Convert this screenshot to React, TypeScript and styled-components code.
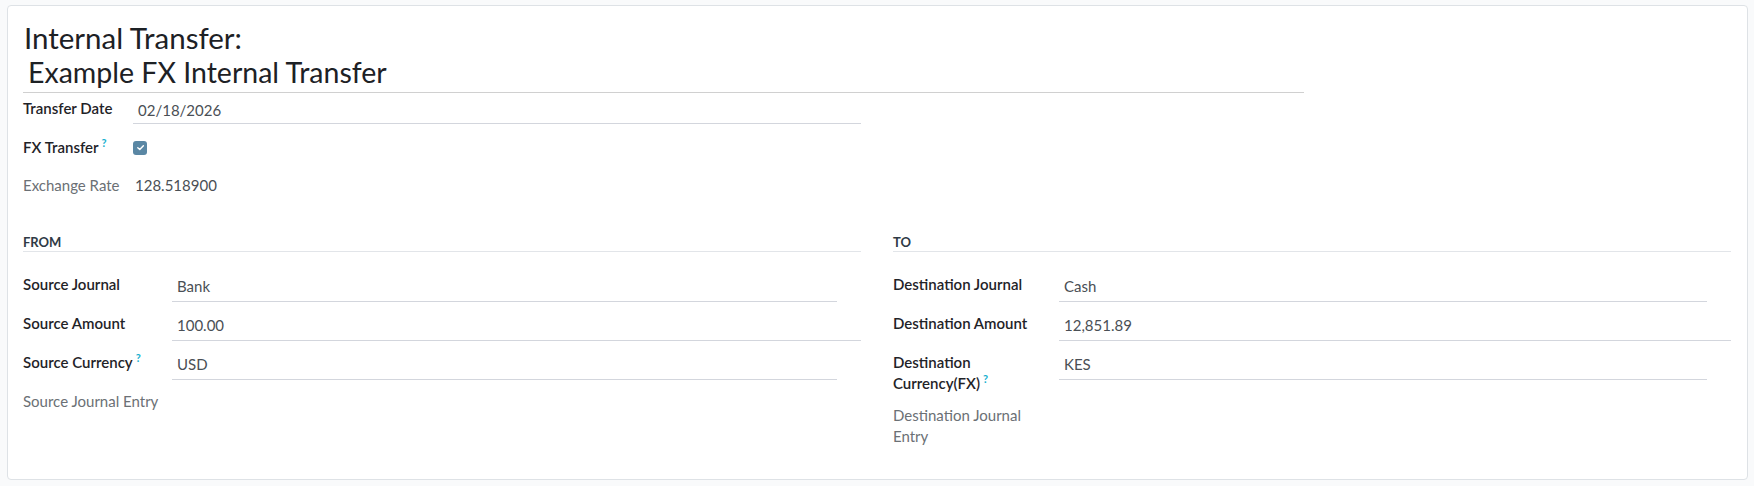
import styled, { createGlobalStyle } from 'styled-components'

const GlobalStyle = createGlobalStyle`
  html, body {
    margin: 0;
    padding: 0;
    background-color: #f9fafb;
  }
  body {
    font-family: Lato, "Liberation Sans", sans-serif;
    font-size: 15px;
    color: #212529;
  }
`

const Page = styled.div`
  padding: 5px 6px 7px 7px;
`

const Sheet = styled.div`
  background-color: #ffffff;
  border: 1px solid #dee2e6;
  border-radius: 4px;
  padding: 14px 16px 32px 15px;
`

const TitleBlock = styled.div`
  width: 75%;
  margin-bottom: 5px;
`

const TitleLabel = styled.h1`
  margin: 0 0 0 1px;
  font-size: 29.5px;
  font-weight: 400;
  line-height: 36px;
  color: #1d2125;
`

const TitleInput = styled.div`
  padding: 0 0 4px 5px;
  font-size: 28.5px;
  line-height: 32px;
  color: #1d2125;
  border-bottom: 1px solid #d0d0d0;
`

const TwoCols = styled.div`
  display: grid;
  grid-template-columns: 1fr 1fr;
  column-gap: 32px;
`

const Label = styled.div<{ $muted?: boolean }>`
  line-height: 21px;
  font-weight: ${(p) => (p.$muted ? 400 : 600)};
  color: ${(p) => (p.$muted ? '#6b7075' : '#1f2328')};
`

const Group = styled.div<{ $labelWidth: number; $labelPad: number }>`
  display: grid;
  grid-template-columns: ${(p) => p.$labelWidth}px 1fr;
  align-items: start;
  & ${Label} {
    padding-right: ${(p) => p.$labelPad}px;
  }
`

const Row = styled.div<{ $gap: number }>`
  display: contents;
  & > * {
    margin-bottom: ${(p) => p.$gap}px;
  }
`

const Help = styled.sup`
  margin-left: 3px;
  font-size: 11px;
  font-weight: 700;
  color: #17b0cf;
  vertical-align: 6px;
  line-height: 0;
`

const Field = styled.div<{ $narrow?: boolean; $pad?: number }>`
  margin-right: ${(p) => (p.$narrow ? 24 : 0)}px;
  padding: 2px 0 ${(p) => p.$pad ?? 3}px 5px;
  line-height: 21px;
  color: #4a4f55;
  border-bottom: 1px solid #d3d6dd;
`

const ReadValue = styled.div`
  padding-left: 2px;
  line-height: 21px;
  color: #4a4f55;
`

const CheckCell = styled.div`
  height: 21px;
  display: flex;
  align-items: center;
`

const CheckBox = styled.span`
  width: 14px;
  height: 14px;
  border-radius: 3px;
  background-color: #5a87a4;
  display: flex;
  align-items: center;
  justify-content: center;
`

const Empty = styled.div`
  height: 21px;
`

const Separator = styled.div`
  margin: 37px 0 22px;
  padding-bottom: 0;
  font-size: 13px;
  font-weight: 700;
  line-height: 18px;
  color: #2f3a45;
  border-bottom: 1px solid #e2e5e9;
`

const Section = styled.div``

function Check() {
  return (
    <CheckBox>
      <svg width="9" height="9" viewBox="0 0 10 10">
        <path d="M2 5.2 L4.2 7.3 L8.2 3" fill="none" stroke="#fff" strokeWidth="1.6" strokeLinecap="round" strokeLinejoin="round" />
      </svg>
    </CheckBox>
  )
}

function App() {
  return (
    <>
      <GlobalStyle />
      <Page>
        <Sheet>
          <TitleBlock>
            <TitleLabel>Internal Transfer:</TitleLabel>
            <TitleInput>Example FX Internal Transfer</TitleInput>
          </TitleBlock>

          <TwoCols>
            <Group $labelWidth={110} $labelPad={6}>
              <Row $gap={13}>
                <Label>Transfer Date</Label>
                <Field $pad={2}>02/18/2026</Field>
              </Row>
              <Row $gap={17}>
                <Label>
                  FX Transfer<Help>?</Help>
                </Label>
                <CheckCell>
                  <Check />
                </CheckCell>
              </Row>
              <Row $gap={0}>
                <Label $muted>Exchange Rate</Label>
                <ReadValue>128.518900</ReadValue>
              </Row>
            </Group>
            <div />
          </TwoCols>

          <TwoCols>
            <Section>
              <Separator>FROM</Separator>
              <Group $labelWidth={149} $labelPad={6}>
                <Row $gap={11}>
                  <Label>Source Journal</Label>
                  <Field $narrow $pad={4}>Bank</Field>
                </Row>
                <Row $gap={11}>
                  <Label>Source Amount</Label>
                  <Field $pad={4}>100.00</Field>
                </Row>
                <Row $gap={11}>
                  <Label>
                    Source Currency<Help>?</Help>
                  </Label>
                  <Field $narrow $pad={4}>USD</Field>
                </Row>
                <Row $gap={0}>
                  <Label $muted>Source Journal Entry</Label>
                  <Empty />
                </Row>
              </Group>
            </Section>
            <Section>
              <Separator>TO</Separator>
              <Group $labelWidth={166} $labelPad={16}>
                <Row $gap={11}>
                  <Label>Destination Journal</Label>
                  <Field $narrow $pad={4}>Cash</Field>
                </Row>
                <Row $gap={11}>
                  <Label>Destination Amount</Label>
                  <Field $pad={4}>12,851.89</Field>
                </Row>
                <Row $gap={11}>
                  <Label>
                    Destination Currency(FX)<Help>?</Help>
                  </Label>
                  <Field $narrow $pad={4}>KES</Field>
                </Row>
                <Row $gap={0}>
                  <Label $muted>Destination Journal Entry</Label>
                  <Empty />
                </Row>
              </Group>
            </Section>
          </TwoCols>
        </Sheet>
      </Page>
    </>
  )
}

export default App
